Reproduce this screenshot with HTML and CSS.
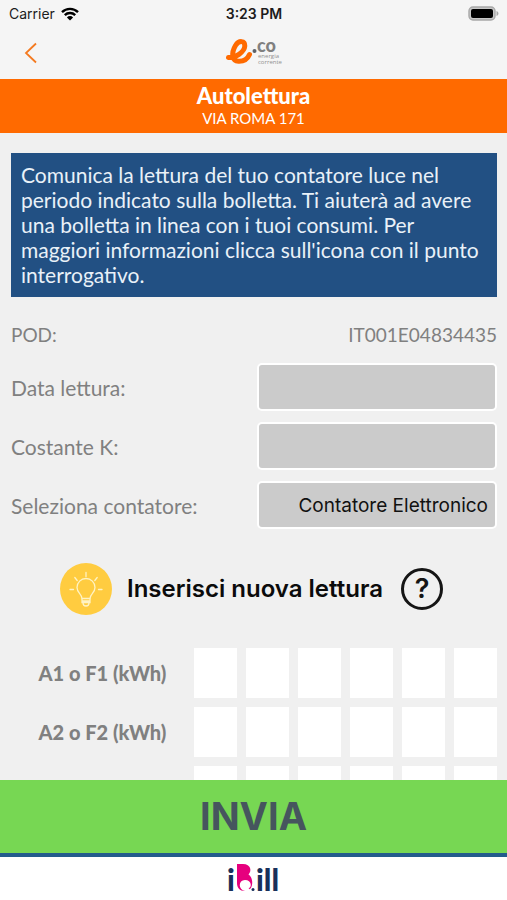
FILE: index.html
```html
<!DOCTYPE html>
<html lang="it">
<head>
<meta charset="utf-8">
<meta name="viewport" content="width=device-width, initial-scale=1">
<title>Autolettura</title>
<link rel="stylesheet" href="styles.css">
</head>
<body>
<div class="app">
  <header class="top">
    <div class="status">
      <div class="carrier">
        <span>Carrier</span>
        <svg class="wifi" viewBox="0 0 18 14" aria-hidden="true">
          <path d="M1 5.2a11.4 11.4 0 0 1 16 0M3.8 8.1a7.4 7.4 0 0 1 10.4 0" fill="none" stroke="#000" stroke-width="2.4"/>
          <path d="M9 13.6 5.9 10.4a4.4 4.4 0 0 1 6.2 0z"/>
        </svg>
      </div>
      <span class="clock">3:23 PM</span>
      <svg class="battery" viewBox="0 0 31 15" aria-hidden="true">
        <rect x="1" y="1" width="26" height="13" rx="4" fill="#c8c8c8" stroke="#a8a8a8" stroke-width="1.4"/>
        <rect x="3" y="3" width="22" height="9" rx="2"/>
        <path d="M28.5 5v5c2.600-.8 2.600-4.200 0-5z" fill="#a8a8a8"/>
      </svg>
    </div>
    <nav class="nav">
      <button class="back" type="button" aria-label="Indietro">
        <svg viewBox="0 0 14 22" aria-hidden="true"><path d="M12 1.500 2 11l10 9.500" fill="none" stroke="#f47a20" stroke-width="1.800"/></svg>
      </button>
      <svg class="logo" viewBox="0 0 60 32" role="img" aria-label="e.co energia corrente">
        <path d="M4.500 20.500C11 21.500 20.500 15 20.800 9C21 3.500 15 3 11.500 8.500C7 16 8 24 14.500 24.300C19.500 24.500 23.500 22 25.500 17.500" fill="none" stroke="#ff6a00" stroke-width="5" stroke-linecap="round"/>
        <circle cx="30.500" cy="14" r="2" fill="#5d6268"/>
        <text class="logo-name" x="33" y="15">co</text>
        <text class="logo-sub" x="34" y="21">energia</text>
        <text class="logo-sub" x="34" y="27">corrente</text>
      </svg>
    </nav>
  </header>
  <div class="banner">
    <h1>Autolettura</h1>
    <p>VIA ROMA 171</p>
  </div>
  <main class="content">
    <p class="notice">Comunica la lettura del tuo contatore luce nel periodo indicato sulla bolletta. Ti aiuterà ad avere una bolletta in linea con i tuoi consumi. Per maggiori informazioni clicca sull'icona con il punto interrogativo.</p>
    <div class="pod"><span>POD:</span><span>IT001E04834435</span></div>
    <div class="fields">
      <label for="data">Data lettura:</label>
      <input id="data" type="text">
      <label for="costante">Costante K:</label>
      <input id="costante" type="text">
      <label for="contatore">Seleziona contatore:</label>
      <select id="contatore"><option>Contatore Elettronico</option></select>
    </div>
    <div class="heading">
      <svg class="bulb" viewBox="0 0 52 52" aria-hidden="true">
        <circle cx="26" cy="26" r="26" fill="#ffcc40"/>
        <g fill="none" stroke="#fff3c4" stroke-width="1.300" stroke-linecap="round">
          <path d="M22 35.500c0-4.500-5-5.500-5-11a9 9 0 0 1 18 0c0 5.500-5 6.500-5 11z"/>
          <path d="M22 36v3.500h8V36M23 40c0 4 6 4 6 0M22 38h8M26 9.500v4M14.800 14.500l2.400 3M37.200 14.500l-2.400 3M10 26.500h3.500M38.500 26.500H42"/>
        </g>
      </svg>
      <h2>Inserisci nuova lettura</h2>
      <button class="help" type="button" aria-label="Aiuto">?</button>
    </div>
    <div class="readings">
      <div class="reading" role="group" aria-labelledby="f1">
        <span id="f1">A1 o F1 (kWh)</span>
        <input aria-label="F1 cifra 1" inputmode="numeric" maxlength="1"><input aria-label="F1 cifra 2" inputmode="numeric" maxlength="1"><input aria-label="F1 cifra 3" inputmode="numeric" maxlength="1"><input aria-label="F1 cifra 4" inputmode="numeric" maxlength="1"><input aria-label="F1 cifra 5" inputmode="numeric" maxlength="1"><input aria-label="F1 cifra 6" inputmode="numeric" maxlength="1">
      </div>
      <div class="reading" role="group" aria-labelledby="f2">
        <span id="f2">A2 o F2 (kWh)</span>
        <input aria-label="F2 cifra 1" inputmode="numeric" maxlength="1"><input aria-label="F2 cifra 2" inputmode="numeric" maxlength="1"><input aria-label="F2 cifra 3" inputmode="numeric" maxlength="1"><input aria-label="F2 cifra 4" inputmode="numeric" maxlength="1"><input aria-label="F2 cifra 5" inputmode="numeric" maxlength="1"><input aria-label="F2 cifra 6" inputmode="numeric" maxlength="1">
      </div>
      <div class="reading" role="group" aria-label="F3">
        <span></span>
        <input aria-label="F3 cifra 1" inputmode="numeric" maxlength="1"><input aria-label="F3 cifra 2" inputmode="numeric" maxlength="1"><input aria-label="F3 cifra 3" inputmode="numeric" maxlength="1"><input aria-label="F3 cifra 4" inputmode="numeric" maxlength="1"><input aria-label="F3 cifra 5" inputmode="numeric" maxlength="1"><input aria-label="F3 cifra 6" inputmode="numeric" maxlength="1">
      </div>
    </div>
  </main>
  <button class="send" type="button">INVIA</button>
  <footer class="footer">
    <svg class="ibill" viewBox="0 0 54 32" role="img" aria-label="iBill">
      <text class="ibill-text" x="0" y="28">i</text>
      <path d="M10 1h6c8 0 9 7 5.500 10.500C27 15 27 28 18 28C12.500 28 10 24.500 10 20z" fill="#e6007e"/>
      <path d="M18 28c-7-1-7-11 0-11s7 8 3.500 8l3.500 4z" fill="#fff"/>
      <circle cx="26" cy="26.500" r="1.500" fill="#18305b"/>
      <text class="ibill-text" x="29" y="28">ill</text>
    </svg>
  </footer>
</div>
</body>
</html>
```
FILE: styles.css
```css
* {
  box-sizing: border-box;
}

body {
  margin: 0;
  font-family: Lato, "Liberation Sans", sans-serif;
  font-size: 21px;
  color: #808080;
  background: #f0f0f0;
}

h1, h2, p {
  margin: 0;
}

button, input, select {
  margin: 0;
  padding: 0;
  border: 0;
  border-radius: 0;
  font: inherit;
}

svg {
  overflow: visible;
}

.app {
  display: flex;
  flex-direction: column;
  height: 100vh;
}

.top {
  flex: none;
  background: #f5f5f5;
}

.status {
  display: grid;
  grid-template-columns: 1fr auto 1fr;
  align-items: center;
  height: 27px;
  padding: 0 8px 0 9px;
  font-family: Inter, sans-serif;
  font-size: 14px;
  color: #1c1c1c;
}

.carrier {
  display: flex;
  align-items: center;
  gap: 6px;
}

.wifi {
  width: 18px;
  height: 14px;
}

.clock {
  font-weight: 600;
}

.battery {
  width: 31px;
  height: 15px;
  justify-self: end;
}

.nav {
  display: grid;
  grid-template-columns: 1fr auto 1fr;
  align-items: center;
  height: 52px;
  padding: 0 16px;
}

.back {
  display: flex;
  align-items: center;
  justify-content: center;
  justify-self: start;
  width: 30px;
  height: 46px;
  background: none;
}

.back svg {
  width: 14px;
  height: 22px;
}

.logo {
  width: 60px;
  height: 32px;
}

.logo-name {
  font: 900 18px/1 Lato, sans-serif;
  fill: #808080;
}

.logo-sub {
  font: 6px/1 "Open Sans", sans-serif;
  fill: #909090;
}

.banner {
  flex: none;
  height: 54px;
  padding-top: 4px;
  background: #ff6a00;
  color: #fff;
  text-align: center;
}

.banner h1 {
  font-size: 22px;
  font-weight: 900;
  line-height: 26px;
}

.banner p {
  font-size: 15px;
  line-height: 18px;
}

.content {
  flex: 1;
  min-height: 0;
  overflow: hidden;
  padding: 20px 10px 0 11px;
}

.notice {
  padding: 9px 10px 10px;
  background: #225083;
  color: #e9f1f8;
  line-height: 25px;
}

.pod {
  display: flex;
  justify-content: space-between;
  padding: 25px 0 15px;
  font-size: 19px;
  line-height: 26px;
}

.fields {
  display: grid;
  grid-template-columns: 1fr 240px;
  align-items: center;
  row-gap: 11px;
}

.fields input,
.fields select {
  width: 100%;
  height: 48px;
  padding: 0 7px;
  appearance: none;
  border: 2px solid #fff;
  border-radius: 5px;
  background: #cbcbcb;
  color: #111;
  font-family: Inter, sans-serif;
  font-size: 19px;
  text-align: right;
  text-align-last: right;
}

.heading {
  display: flex;
  align-items: center;
  justify-content: center;
  padding: 34px 5px 33px 0;
}

.bulb {
  width: 52px;
  height: 52px;
}

.heading h2 {
  margin: 0 18px 0 15px;
  color: #0b0b0b;
  font: 600 24px/30px Inter, sans-serif;
}

.help {
  width: 42px;
  height: 42px;
  border: 3px solid #151515;
  border-radius: 50%;
  background: none;
  color: #151515;
  font: 600 27px/36px Inter, sans-serif;
}

.readings {
  display: grid;
  row-gap: 9px;
}

.reading {
  display: grid;
  grid-template-columns: 1fr repeat(6, 43px);
  column-gap: 9px;
  align-items: center;
  font-size: 20px;
  font-weight: 900;
  text-align: center;
}

.reading span {
  padding-left: 9px;
}

.reading input {
  width: 100%;
  height: 50px;
  background: #fff;
  text-align: center;
}

.send {
  flex: none;
  height: 77px;
  border-bottom: 4px solid #235b8c;
  background: #77d753;
  color: #46555e;
  font: 700 38px/73px Inter, sans-serif;
}

.footer {
  flex: none;
  display: flex;
  justify-content: center;
  height: 43px;
  padding-top: 6px;
  background: #fff;
}

.ibill {
  width: 54px;
  height: 32px;
}

.ibill-text {
  font: 900 30px/1 Lato, sans-serif;
  fill: #18305b;
}
```
